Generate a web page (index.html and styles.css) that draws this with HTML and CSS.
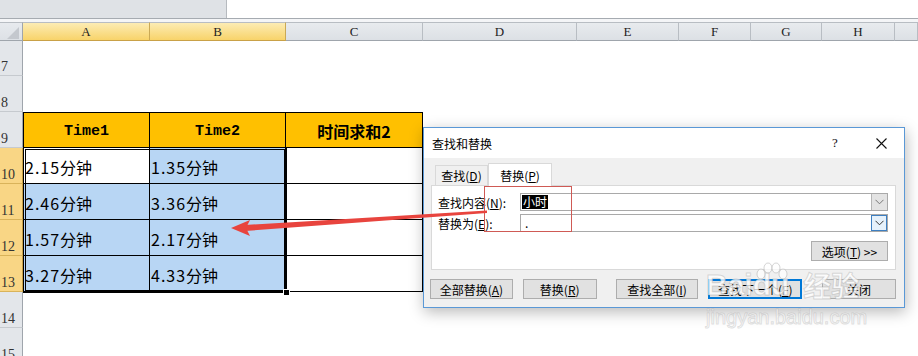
FILE: index.html
```html
<!DOCTYPE html>
<html lang="zh-CN">
<head>
<meta charset="utf-8">
<title>查找和替换</title>
<link rel="stylesheet" href="styles.css">
</head>
<body>
<div class="app">
  <div class="topbar"><div class="namebox"></div><div class="formula"></div></div>
  <div class="band"></div>
  <div class="sheet">
    <div class="corner"><svg width="12" height="12" viewBox="0 0 12 12"><path d="M12 0V12H0Z" fill="#c4c8ce"/></svg></div>
    <div class="ch sel">A</div>
    <div class="ch sel">B</div>
    <div class="ch">C</div>
    <div class="ch">D</div>
    <div class="ch">E</div>
    <div class="ch">F</div>
    <div class="ch">G</div>
    <div class="ch">H</div>
    <div class="ch"></div>
    <div class="rh">7</div>
    <div class="rh">8</div>
    <div class="rh">9</div>
    <div class="rh sel">10</div>
    <div class="rh sel">11</div>
    <div class="rh sel">12</div>
    <div class="rh sel">13</div>
    <div class="rh">14</div>
    <div class="rh">15</div>
    <div class="tbl">
      <div class="th c1">Time1</div>
      <div class="th">Time2</div>
      <div class="th cjk">时间求和2</div>
      <div class="td c1"><span class="num">2.15</span>分钟</div>
      <div class="td hl"><span class="num">1.35</span>分钟</div>
      <div class="td"></div>
      <div class="td c1 hl"><span class="num">2.46</span>分钟</div>
      <div class="td hl"><span class="num">3.36</span>分钟</div>
      <div class="td"></div>
      <div class="td c1 hl"><span class="num">1.57</span>分钟</div>
      <div class="td hl"><span class="num">2.17</span>分钟</div>
      <div class="td"></div>
      <div class="td c1 hl"><span class="num">3.27</span>分钟</div>
      <div class="td hl"><span class="num">4.33</span>分钟</div>
      <div class="td"></div>
      <div class="selbox"><span class="handle"></span></div>
    </div>
  </div>
</div>

<div class="dialog">
  <div class="titlebar">
    <span class="title">查找和替换</span>
    <span class="tbtn help">?</span>
    <span class="tbtn close"><svg width="11" height="11" viewBox="0 0 11 11"><path d="M0.5 0.5L10.5 10.5M10.5 0.5L0.5 10.5" stroke="#111" stroke-width="1.1" fill="none"/></svg></span>
  </div>
  <div class="dbody">
    <div class="tabs">
      <div class="tab">查找(<u>D</u>)</div>
      <div class="tab active">替换(<u>P</u>)</div>
    </div>
    <div class="panel">
      <div class="field">
        <span class="lbl">查找内容(<u>N</u>):</span>
        <div class="combo"><span class="seltext">小时</span><span class="dd"><svg width="9" height="6" viewBox="0 0 9 6"><path d="M0.5 0.8L4.5 4.8L8.5 0.8" stroke="#777" fill="none"/></svg></span></div>
      </div>
      <div class="field f2">
        <span class="lbl">替换为(<u>E</u>):</span>
        <div class="combo"><span class="val">.</span><span class="dd hot"><svg width="9" height="6" viewBox="0 0 9 6"><path d="M0.5 0.8L4.5 4.8L8.5 0.8" stroke="#333" fill="none"/></svg></span></div>
      </div>
      <div class="optrow"><div class="btn opt">选项(<u>T</u>) &gt;&gt;</div></div>
    </div>
    <div class="btnrow">
      <div class="btn b1">全部替换(<u>A</u>)</div>
      <div class="btn b2">替换(<u>R</u>)</div>
      <div class="btn b3">查找全部(<u>I</u>)</div>
      <div class="btn b4 def">查找下一个(<u>F</u>)</div>
      <div class="btn b5">关闭</div>
    </div>
  </div>
</div>

<div class="redbox"></div>
<svg class="arrow" width="918" height="356" viewBox="0 0 918 356">
  <polygon points="245,225 487,210.5 487,213 245,231" fill="#e8443e"/>
  <polygon points="231,228 250,220 246,228 250,236" fill="#e8443e"/>
</svg>

<div class="wm">
  <div class="logo"><span>Bai</span><span class="du">du<svg class="paw" width="34" height="20" viewBox="0 0 34 20"><ellipse cx="6" cy="12" rx="4" ry="5"/><ellipse cx="13" cy="6" rx="4" ry="5"/><ellipse cx="21" cy="6" rx="4" ry="5"/><ellipse cx="28" cy="12" rx="4" ry="5"/></svg></span><span class="jy">经验</span></div>
  <div class="url">jingyan.baidu.com</div>
</div>
</body>
</html>
```

FILE: styles.css
```css
html, body {
  margin: 0;
  padding: 0;
  width: 918px;
  height: 356px;
  overflow: hidden;
  background: #fff;
}
body {
  position: relative;
  font-family: "Noto Sans CJK SC", sans-serif;
  color: #000;
}

/* top formula bar */
.topbar {
  display: flex;
  height: 18px;
  border-bottom: 1px solid #a6abb1;
}
.namebox {
  width: 226px;
  background: #dfe2e6;
  border-right: 1px solid #b6babf;
}
.formula { flex: 1; background: #fff; }
.band { height: 3px; background: #f4f5f7; }

/* sheet grid */
.sheet {
  display: grid;
  grid-template-columns: 23px 127px 136px 137px 154px 102px 72px 71px 73px 23px;
  grid-template-rows: 19px 35px repeat(8, 36px);
}
.corner {
  box-sizing: border-box;
  border-top: 1px solid #b8bdc3;
  border-bottom: 1px solid #9fa5ac;
  border-right: 1px solid #9fa5ac;
  background: linear-gradient(#e7eaee, #dde1e6);
  display: flex;
  justify-content: flex-end;
  align-items: flex-end;
  padding: 0 3px 1px 0;
}
.ch {
  box-sizing: border-box;
  border-top: 1px solid #b8bdc3;
  border-bottom: 1px solid #9fa5ac;
  border-right: 1px solid #b8bdc3;
  background: linear-gradient(#e8ebee, #dce0e5);
  font: 13px "Liberation Serif", serif;
  color: #222;
  text-align: center;
  line-height: 17px;
}
.ch.sel {
  background: linear-gradient(#fcecb4, #f8d36a);
  border-right-color: #caa955;
  border-bottom-color: #c9a147;
}
.rh {
  grid-column: 1;
  box-sizing: border-box;
  border-right: 1px solid #9fa5ac;
  border-bottom: 1px solid #c6cacf;
  background: #e3e6ea;
  font: 14px "Liberation Serif", serif;
  color: #333;
  display: flex;
  align-items: flex-end;
  padding: 0 0 1px 1px;
  line-height: 14px;
}
.rh.sel {
  background: #f9d685;
  border-bottom-color: #d9b35a;
  border-right-color: #c9a147;
}

/* data table */
.tbl {
  grid-column: 2 / 5;
  grid-row: 4 / 9;
  position: relative;
  display: grid;
  grid-template-columns: 127px 136px 137px;
  grid-template-rows: repeat(5, 36px);
}
.th, .td {
  box-sizing: border-box;
  border-right: 1px solid #000;
  border-bottom: 1px solid #000;
}
.c1 { border-left: 1px solid #000; }
.th {
  background: #ffc000;
  border-top: 1px solid #000;
  display: flex;
  align-items: center;
  justify-content: center;
  padding-top: 3px;
  font: bold 15px "Liberation Mono", monospace;
}
.th.cjk { font: bold 16px "Noto Sans CJK SC", sans-serif; padding-top: 1px; }
.td {
  background: #fff;
  display: flex;
  align-items: center;
  padding: 3px 0 0 1px;
  font-size: 16px;
}
.num { letter-spacing: 1px; }
.td.hl { background: #b8d6f4; }
.selbox {
  position: absolute;
  left: 0;
  top: 35px;
  width: 264px;
  height: 146px;
  box-sizing: border-box;
  border: 3px double #000;
}
.handle {
  position: absolute;
  right: -6px;
  bottom: -6px;
  width: 5px;
  height: 5px;
  background: #000;
  border: 1px solid #fff;
}

/* dialog */
.dialog {
  position: absolute;
  left: 423px;
  top: 127px;
  width: 482px;
  height: 181px;
  box-sizing: border-box;
  border: 1px solid #5a98d6;
  background: #f0f0f0;
  box-shadow: 1px 4px 14px rgba(0, 0, 0, 0.28);
  display: flex;
  flex-direction: column;
  font-size: 12px;
}
.titlebar {
  height: 30px;
  background: #fff;
  display: flex;
  align-items: center;
  padding-left: 8px;
}
.title { flex: 1; font-size: 12px; }
.tbtn {
  width: 46px;
  height: 30px;
  display: flex;
  align-items: center;
  justify-content: center;
}
.help { font: 13px "Liberation Serif", serif; color: #111; }
.dbody {
  flex: 1;
  padding: 5px 8px 0 7px;
  display: flex;
  flex-direction: column;
}
.tabs {
  display: flex;
  align-items: flex-end;
  height: 22px;
  padding-left: 4px;
}
.tab {
  box-sizing: border-box;
  height: 20px;
  width: 53px;
  border: 1px solid #d9d9d9;
  border-bottom: none;
  background: #f0f0f0;
  display: flex;
  align-items: center;
  justify-content: center;
}
.tab.active {
  height: 23px;
  width: 64px;
  margin-bottom: -1px;
  background: #fff;
  position: relative;
  z-index: 1;
}
.panel {
  box-sizing: border-box;
  height: 85px;
  border: 1px solid #d9d9d9;
  background: #fff;
  padding: 7px 7px 0 6px;
  display: flex;
  flex-direction: column;
}
.field {
  display: flex;
  align-items: center;
  height: 18px;
}
.field.f2 { margin-top: 3px; }
.lbl { width: 82px; }
.combo {
  box-sizing: border-box;
  width: 368px;
  height: 18px;
  border: 1px solid #a9a9a9;
  background: #fff;
  display: flex;
  align-items: center;
  padding-left: 1px;
}
.seltext {
  background: #000;
  color: #fff;
  height: 14px;
  line-height: 14px;
  padding: 0 1px;
}
.val { padding-left: 3px; line-height: 14px; }
.dd {
  margin-left: auto;
  box-sizing: border-box;
  width: 16px;
  height: 16px;
  background: #e3e3e3;
  border-left: 1px solid #b5b5b5;
  display: flex;
  align-items: center;
  justify-content: center;
}
.dd.hot {
  background: #e5f1fb;
  border: 1px solid #3d7fc1;
}
.optrow {
  display: flex;
  justify-content: flex-end;
  margin-top: 9px;
}
.btn {
  box-sizing: border-box;
  height: 20px;
  border: 1px solid #adadad;
  background: #e1e1e1;
  display: flex;
  align-items: center;
  justify-content: center;
  font-size: 12px;
}
.btn.opt { width: 77px; }
.btnrow {
  display: flex;
  margin-top: 9px;
}
.b1 { width: 83px; margin-left: -1px; }
.b2 { width: 74px; margin-left: 10px; }
.b3 { width: 83px; margin-left: 19px; }
.b4 { width: 94px; margin-left: 10px; }
.b5 { width: 74px; margin-left: 20px; }
.btn.def { border: 2px solid #0078d7; background: #e1e1e1; }

/* annotations */
.redbox {
  position: absolute;
  left: 484px;
  top: 186px;
  width: 88px;
  height: 46px;
  box-sizing: border-box;
  border: 1px solid #cf5a55;
}
.arrow {
  position: absolute;
  left: 0;
  top: 0;
  pointer-events: none;
}

/* watermark */
.wm {
  position: absolute;
  left: 706px;
  top: 262px;
  color: rgba(255, 255, 255, 0.78);
  -webkit-text-stroke: 1px rgba(150, 150, 150, 0.35);
  pointer-events: none;
}
.logo {
  display: flex;
  align-items: flex-end;
  font: bold 30px "Liberation Sans", sans-serif;
  line-height: 34px;
  height: 40px;
}
.du { position: relative; }
.paw {
  position: absolute;
  left: 2px;
  top: -6px;
  fill: rgba(255, 255, 255, 0.7);
  stroke: rgba(150, 150, 150, 0.4);
}
.jy {
  font: bold 28px "Noto Sans CJK SC", sans-serif;
  margin-left: 14px;
  line-height: 34px;
}
.url {
  font: 20px "Liberation Sans", sans-serif;
  color: rgba(255, 255, 255, 0.7);
  -webkit-text-stroke: 1px rgba(150, 150, 150, 0.3);
  margin-top: 4px;
}
```
